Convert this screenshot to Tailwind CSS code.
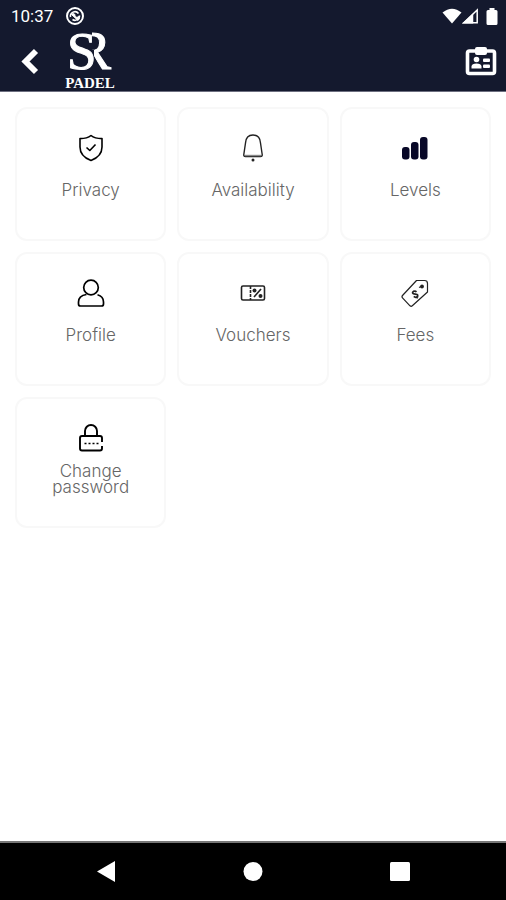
<!DOCTYPE html>
<html lang="en">
<head>
<meta charset="utf-8">
<meta name="viewport" content="width=device-width, initial-scale=1">
<title>SR Padel</title>
<script src="https://cdn.jsdelivr.net/npm/@tailwindcss/browser@4"></script>
</head>
<body class="flex min-h-screen flex-col bg-white font-['Inter','Open_Sans',sans-serif]">
<header class="border-b border-[#6d6f80] bg-[#14192e] text-white">
  <div class="flex h-8 items-center justify-between pl-[11px] pr-2">
    <div class="flex items-center gap-3">
      <span class="font-['Roboto',sans-serif] text-[17px] leading-8">10:37</span>
      <svg class="size-5" viewBox="0 0 20 20" fill="none" stroke="currentColor" aria-hidden="true"><circle cx="10" cy="10" r="8" stroke-width="2"/><path d="M5.500 11a4.500 4.500 0 0 1 8-3.500M14.500 9.500a4.500 4.500 0 0 1-7 4" stroke-width="1.600"/><path d="M6.500 8.500c2-2 3.500-.5 3.500 1s2 2.500 3.500 1l1 2-1.500 2z" fill="currentColor" stroke-width="1"/></svg>
    </div>
    <div class="flex items-center">
      <svg class="h-4 w-5" viewBox="0 0 20 16" fill="currentColor" aria-hidden="true"><path d="M.5 4.500Q10-3.200 19.500 4.500L10 15.500z"/></svg>
      <svg class="h-4 w-[17px]" viewBox="0 0 17 16" fill="none" stroke="currentColor" stroke-width="1.500" aria-hidden="true"><path d="M1.800 14.700L15.200 2v12.700z"/><path d="M2 14.700L10.500 7v7.700z" fill="currentColor"/></svg>
      <svg class="ml-[7px] h-[17px] w-3" viewBox="0 0 12 17" fill="currentColor" aria-hidden="true"><path d="M3.500 0h5v2H10a1.500 1.500 0 0 1 1.500 1.500V15.500A1.500 1.500 0 0 1 10 17H2A1.500 1.500 0 0 1 .5 15.500V3.500A1.500 1.500 0 0 1 2 2h1.500z"/></svg>
    </div>
  </div>
  <div class="flex h-[59px] items-center justify-between pl-[14px] pr-[9px]">
    <div class="flex items-center gap-[18px]">
      <button type="button" aria-label="Back" class="flex size-8 items-center justify-center"><svg class="h-7 w-5" viewBox="0 0 20 28" fill="none" stroke="currentColor" stroke-width="5.800" aria-hidden="true"><path d="M16 3L5.500 13.500 16 24"/></svg></button>
      <svg class="h-[59px] w-[54px]" viewBox="64 32 54 59" fill="currentColor" role="img" aria-label="SR Padel">
        <defs><clipPath id="bowl"><path d="M92 32h26v40H97V62L94 56V50h-2z"/></clipPath></defs>
        <g font-family="Liberation Serif, serif">
          <text x="67" y="69" font-size="53" stroke="currentColor" stroke-width="1">S</text>
          <text x="75" y="69" font-size="54" stroke="currentColor" stroke-width="1" clip-path="url(#bowl)">R</text>
          <text x="90" y="88" font-size="15" font-weight="700" text-anchor="middle">PADEL</text>
        </g>
      </svg>
    </div>
    <button type="button" aria-label="Member card"><svg class="h-[30px] w-8" viewBox="0 0 32 30" fill="none" stroke="currentColor" aria-hidden="true"><rect x="2.500" y="4" width="27" height="22.500" rx="2" stroke-width="3.600"/><rect x="10" y="0" width="12" height="8" rx="2" fill="currentColor" stroke="none"/><g fill="currentColor" stroke="none"><circle cx="11.500" cy="12.500" r="2.800"/><path d="M6.500 21.500v-2c0-2 2-3 5-3s5 1 5 3v2z"/><rect x="18" y="11.500" width="7" height="3.400" rx="1"/><rect x="18" y="17.500" width="7" height="3.400" rx="1"/></g></svg></button>
  </div>
</header>

<main class="flex-1 px-[15px] pb-4 pt-[15px]">
  <nav aria-label="Settings" class="grid grid-cols-3 gap-[11px] text-center text-[17px] leading-4 font-light text-[#666]">
    <a href="#privacy" class="flex min-h-[134px] flex-col items-center rounded-xl border-2 border-[#f8f8f8] pt-[25px]">
      <svg class="size-7 text-black" viewBox="0 0 28 28" fill="none" stroke="currentColor" stroke-width="1.600" stroke-linejoin="round" aria-hidden="true"><path d="M14 1.500C11 4 7.500 4.600 3 4.600V13c0 7 4.500 11 11 13.500C20.500 24 25 20 25 13V4.600C20.500 4.600 17 4 14 1.500z"/><path d="M9.500 13.500l3.300 3 5.700-6"/></svg>
      <span class="flex h-14 items-center">Privacy</span>
    </a>
    <a href="#availability" class="flex min-h-[134px] flex-col items-center rounded-xl border-2 border-[#f8f8f8] pt-[25px]">
      <svg class="size-7 text-[#222]" viewBox="0 0 28 28" fill="none" stroke="currentColor" stroke-width="1.400" aria-hidden="true"><path d="M14 1C9 1 6.800 4.500 6.500 9L4.800 20.500q-.3 2 1.700 2h15q2 0 1.700-2L21.500 9C21.200 4.500 19 1 14 1z"/><path d="M6 21.500h16" stroke="#888"/><circle cx="14" cy="26" r="1.500" fill="currentColor" stroke="none"/></svg>
      <span class="flex h-14 items-center">Availability</span>
    </a>
    <a href="#levels" class="flex min-h-[134px] flex-col items-center rounded-xl border-2 border-[#f8f8f8] pt-[25px]">
      <svg class="size-7 text-[#080828]" viewBox="0 0 28 28" fill="currentColor" aria-hidden="true"><rect x="1" y="13" width="7.500" height="12.500" rx="3"/><rect x="10" y="8" width="7.500" height="17.500" rx="3"/><rect x="19" y="3" width="7.500" height="22.500" rx="3"/></svg>
      <span class="flex h-14 items-center">Levels</span>
    </a>
    <a href="#profile" class="flex min-h-[134px] flex-col items-center rounded-xl border-2 border-[#f8f8f8] pt-[25px]">
      <svg class="size-7 text-black" viewBox="0 0 28 28" fill="none" stroke="currentColor" stroke-width="1.700" aria-hidden="true"><circle cx="14" cy="8.500" r="7.300"/><path d="M9.500 15.500C4.500 16.200 1.500 19 1.500 23v2q0 2 2 2h21q2 0 2-2v-2c0-3.500-2.500-6.200-6-7.200"/></svg>
      <span class="flex h-14 items-center">Profile</span>
    </a>
    <a href="#vouchers" class="flex min-h-[134px] flex-col items-center rounded-xl border-2 border-[#f8f8f8] pt-[25px]">
      <svg class="size-7 text-[#222]" viewBox="0 0 28 28" fill="none" stroke="currentColor" stroke-width="1.600" aria-hidden="true"><rect x="2.500" y="7" width="23" height="14" rx="1.500"/><path d="M11.500 7v14" stroke-dasharray="3 1"/><path d="M15 18l7-8"/><circle cx="15.500" cy="11.500" r="2" fill="currentColor" stroke="none"/><circle cx="21.500" cy="17" r="2" fill="currentColor" stroke="none"/></svg>
      <span class="flex h-14 items-center">Vouchers</span>
    </a>
    <a href="#fees" class="flex min-h-[134px] flex-col items-center rounded-xl border-2 border-[#f8f8f8] pt-[25px]">
      <svg class="size-7 text-[#222]" viewBox="0 0 28 28" fill="none" stroke="currentColor" stroke-width="1.200" stroke-linejoin="round" aria-hidden="true"><path d="M15.500 1.500L1.500 16.500q-1 1.200 0 2.300L9 26.800q1.200 1 2.300 0L26.500 13V4.500Q26.500 1.500 23.500 1.500z"/><circle cx="21" cy="7.500" r="1.900" fill="currentColor" stroke="none"/><path d="M18 8.500l2-1"/><path d="M15.500 12.800c-1.500-1.500-4.500-.5-3.800 1.300.7 1.700 4.400.2 5 2 .6 1.900-2.200 3-3.900 1.300M12 11.700l1 1.200M15.800 18l1 1.200" stroke-width="1.700"/></svg>
      <span class="flex h-14 items-center">Fees</span>
    </a>
    <a href="#password" class="flex min-h-[131px] flex-col items-center rounded-xl border-2 border-[#f8f8f8] pt-[25px]">
      <svg class="size-7 text-black" viewBox="0 0 28 28" fill="none" stroke="currentColor" stroke-width="1.900" aria-hidden="true"><path d="M8 12V7a6 6 0 0 1 12 0v5M25 18v-4q0-2-2-2H5q-2 0-2 2v10.500q0 2 2 2h18q2 0 2-2V22"/><path d="M7.500 19.500h14" stroke-width="1.400" stroke-dasharray="2 2"/></svg>
      <span class="flex h-[54px] w-24 items-center justify-center">Change password</span>
    </a>
  </nav>
</main>

<footer class="grid h-[59px] grid-cols-[1fr_80px_1fr] items-center border-t-2 border-[#777] bg-black text-white">
  <button type="button" aria-label="Back" class="flex justify-center"><svg class="h-6 w-5" viewBox="0 0 20 24" fill="currentColor" aria-hidden="true"><path d="M18 1v21L0 11.500z"/></svg></button>
  <button type="button" aria-label="Home" class="flex justify-center"><svg class="size-5" viewBox="0 0 20 20" fill="currentColor" aria-hidden="true"><circle cx="10" cy="9.500" r="9.500"/></svg></button>
  <button type="button" aria-label="Recent apps" class="flex justify-center"><svg class="size-5" viewBox="0 0 20 20" fill="currentColor" aria-hidden="true"><rect width="20" height="19" rx="1.500"/></svg></button>
</footer>
</body>
</html>
